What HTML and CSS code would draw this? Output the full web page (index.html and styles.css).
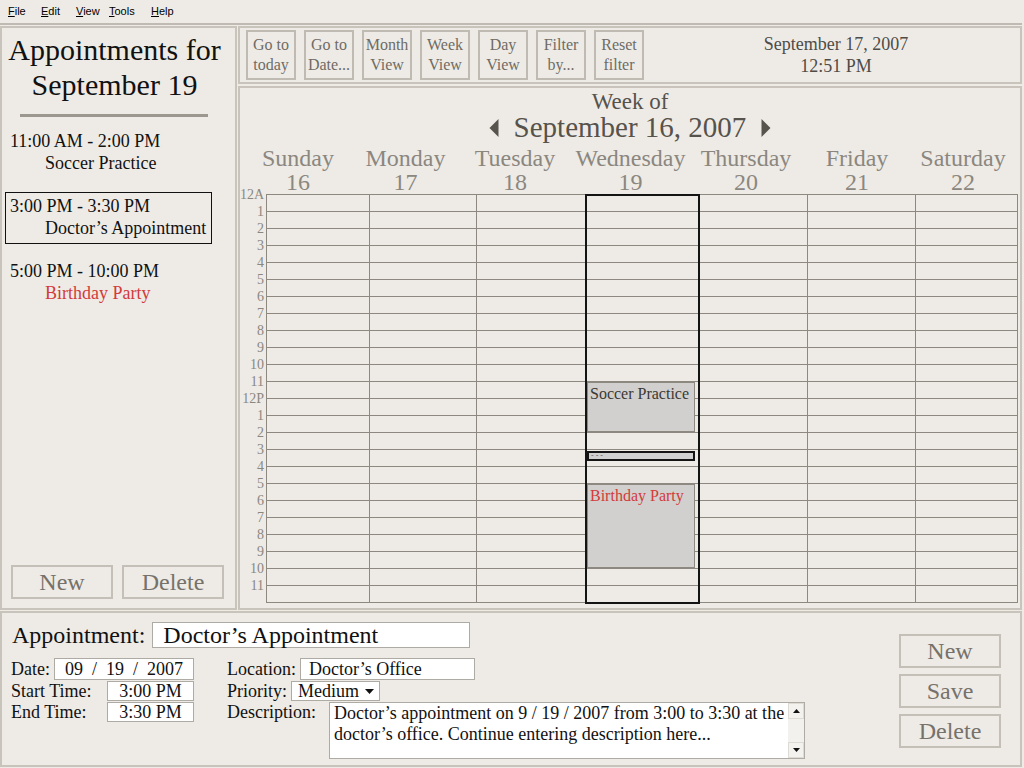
FILE: index.html
```html
<!DOCTYPE html>
<html>
<head>
<meta charset="utf-8">
<title>Calendar</title>
<link rel="stylesheet" href="styles.css">
</head>
<body>
<div class="app">
  <div class="menubar">
    <span class="menu"><u>F</u>ile</span>
    <span class="menu"><u>E</u>dit</span>
    <span class="menu"><u>V</u>iew</span>
    <span class="menu"><u>T</u>ools</span>
    <span class="menu"><u>H</u>elp</span>
  </div>

  <div class="main">
    <aside class="day-panel">
      <h1 class="day-title">Appointments for<br>September 19</h1>
      <div class="rule"></div>
      <ul class="appt-list">
        <li class="appt">
          <div class="appt-time">11:00 AM - 2:00 PM</div>
          <div class="appt-name">Soccer Practice</div>
        </li>
        <li class="appt selected">
          <div class="appt-time">3:00 PM - 3:30 PM</div>
          <div class="appt-name">Doctor’s Appointment</div>
        </li>
        <li class="appt">
          <div class="appt-time">5:00 PM - 10:00 PM</div>
          <div class="appt-name red">Birthday Party</div>
        </li>
      </ul>
      <div class="side-btns">
        <button class="btn">New</button>
        <button class="btn">Delete</button>
      </div>
    </aside>

    <section class="right">
      <div class="toolbar">
        <div class="tbtn"><span>Go to</span><span>today</span></div>
        <div class="tbtn"><span>Go to</span><span>Date...</span></div>
        <div class="tbtn"><span>Month</span><span>View</span></div>
        <div class="tbtn"><span>Week</span><span>View</span></div>
        <div class="tbtn"><span>Day</span><span>View</span></div>
        <div class="tbtn"><span>Filter</span><span>by...</span></div>
        <div class="tbtn"><span>Reset</span><span>filter</span></div>
        <div class="clock">September 17, 2007<br>12:51 PM</div>
      </div>

      <div class="calendar">
        <div class="week-title">Week of</div>
        <div class="week-nav">
          <svg class="arrow" width="10" height="18" viewBox="0 0 10 18"><path d="M9.5 0 L0.5 9 L9.5 18 Z" fill="#57534d"/></svg>
          <span>September 16, 2007</span>
          <svg class="arrow" width="10" height="18" viewBox="0 0 10 18"><path d="M0.5 0 L9.5 9 L0.5 18 Z" fill="#57534d"/></svg>
        </div>
        <div class="day-heads">
          <div class="dh"><span>Sunday</span><span>16</span></div>
          <div class="dh"><span>Monday</span><span>17</span></div>
          <div class="dh"><span>Tuesday</span><span>18</span></div>
          <div class="dh"><span>Wednesday</span><span>19</span></div>
          <div class="dh"><span>Thursday</span><span>20</span></div>
          <div class="dh"><span>Friday</span><span>21</span></div>
          <div class="dh"><span>Saturday</span><span>22</span></div>
        </div>
        <div class="week-body">
          <div class="hours">
            <span>12A</span><span>1</span><span>2</span><span>3</span><span>4</span><span>5</span>
            <span>6</span><span>7</span><span>8</span><span>9</span><span>10</span><span>11</span>
            <span>12P</span><span>1</span><span>2</span><span>3</span><span>4</span><span>5</span>
            <span>6</span><span>7</span><span>8</span><span>9</span><span>10</span><span>11</span>
          </div>
          <div class="grid">
            <div class="day"></div>
            <div class="day"></div>
            <div class="day"></div>
            <div class="day sel">
              <div class="event" style="top:187px;height:50px">Soccer Practice</div>
              <div class="event tiny" style="top:256px;height:10px">- - -</div>
              <div class="event red" style="top:289px;height:84px">Birthday Party</div>
            </div>
            <div class="day"></div>
            <div class="day"></div>
            <div class="day"></div>
          </div>
        </div>
      </div>
    </section>
  </div>

  <div class="details">
    <div class="form">
      <div class="appt-row">
        <span class="appt-label">Appointment:</span>
        <div class="in-title">Doctor’s Appointment</div>
      </div>
      <div class="fields">
        <div class="col col-left">
          <div class="frow tall">
            <span class="lbl">Date:</span>
            <div class="box date"><span>09</span><span>/</span><span>19</span><span>/</span><span>2007</span></div>
          </div>
          <div class="frow">
            <span class="lbl lbl-time">Start Time:</span>
            <div class="box time">3:00 PM</div>
          </div>
          <div class="frow">
            <span class="lbl lbl-time">End Time:</span>
            <div class="box time">3:30 PM</div>
          </div>
        </div>
        <div class="col col-mid">
          <div class="frow tall">
            <span class="lbl">Location:</span>
            <div class="box location">Doctor’s Office</div>
          </div>
          <div class="frow">
            <span class="lbl">Priority:</span>
            <div class="box select">Medium
              <svg width="9" height="5" viewBox="0 0 9 5"><path d="M0 0 L9 0 L4.5 5 Z" fill="#111"/></svg>
            </div>
          </div>
          <div class="frow desc-row">
            <span class="lbl lbl-desc">Description:</span>
            <div class="ta">
              <div class="ta-text">Doctor’s appointment on 9 / 19 / 2007 from 3:00 to 3:30 at the<br>doctor’s office. Continue entering description here...</div>
              <div class="sb">
                <div class="sb-btn"><svg width="7" height="4" viewBox="0 0 7 4"><path d="M0 4 L7 4 L3.5 0 Z" fill="#111"/></svg></div>
                <div class="sb-btn"><svg width="7" height="4" viewBox="0 0 7 4"><path d="M0 0 L7 0 L3.5 4 Z" fill="#111"/></svg></div>
              </div>
            </div>
          </div>
        </div>
      </div>
    </div>
    <div class="actions">
      <button class="btn">New</button>
      <button class="btn">Save</button>
      <button class="btn">Delete</button>
    </div>
  </div>
</div>
</body>
</html>
```

FILE: styles.css
```css
* { box-sizing: border-box; }

html, body {
  margin: 0;
  padding: 0;
  background: #eeebe6;
}

body {
  font-family: "Liberation Serif", "Times New Roman", serif;
  color: #111;
  width: 1024px;
  height: 768px;
  overflow: hidden;
}

.app {
  width: 1022px;
  height: 768px;
  display: flex;
  flex-direction: column;
}

/* Menu bar */
.menubar {
  height: 25px;
  border-bottom: 2px solid #bfbbb2;
  display: grid;
  grid-template-columns: 33px 35px 33px 42px auto;
  justify-content: start;
  align-items: center;
  padding: 0 0 1px 8px;
  font-family: "Liberation Sans", Arial, sans-serif;
  font-size: 11px;
  color: #000;
}

.menu u { text-decoration: underline; }

/* Main area */
.main {
  display: flex;
  gap: 1px;
  padding-top: 1px;
  height: 585px;
}

.day-panel {
  width: 237px;
  border: 2px solid #c8c4bb;
  display: flex;
  flex-direction: column;
  padding: 4px 0 9px 0;
}

.day-title {
  margin: 0;
  padding-right: 8px;
  font-size: 30px;
  line-height: 35px;
  font-weight: normal;
  text-align: center;
  color: #111;
}

.rule {
  margin: 12px 0 0 18px;
  width: 188px;
  height: 3px;
  background: #9c988f;
}

.appt-list {
  list-style: none;
  margin: 10px 0 0 3px;
  padding: 0;
  display: flex;
  flex-direction: column;
  gap: 13px;
}

.appt {
  width: 207px;
  border: 1px solid transparent;
  padding: 2px 4px 4px 4px;
  font-size: 18px;
  line-height: 22px;
  color: #111;
  white-space: nowrap;
}

.appt.selected { border-color: #111; }

.appt-name { padding-left: 35px; }

.red { color: #d33b3b; }

.side-btns {
  margin-top: auto;
  display: flex;
  gap: 9px;
  padding-left: 9px;
}

.btn {
  width: 102px;
  height: 34px;
  background: transparent;
  border: 2px solid #c4c0b7;
  font-family: "Liberation Serif", "Times New Roman", serif;
  font-size: 24px;
  line-height: 28px;
  color: #76726b;
  padding: 0;
  margin: 0;
}

/* Right column */
.right {
  flex: 1;
  display: flex;
  flex-direction: column;
  gap: 2px;
}

.toolbar {
  height: 58px;
  border: 2px solid #c8c4bb;
  display: flex;
  align-items: flex-start;
  gap: 8px;
  padding: 2px 0 0 6px;
}

.tbtn {
  width: 50px;
  height: 50px;
  border: 2px solid #bfbbb2;
  display: flex;
  flex-direction: column;
  align-items: center;
  justify-content: center;
  font-size: 16px;
  line-height: 20px;
  color: #6f6b65;
  white-space: nowrap;
}

.clock {
  flex: 1;
  text-align: center;
  font-size: 18px;
  line-height: 22px;
  color: #4f4b46;
  padding-top: 3px;
}

.calendar {
  flex: 1;
  border: 2px solid #c8c4bb;
  padding-top: 2px;
}

.week-title {
  text-align: center;
  font-size: 23px;
  line-height: 23px;
  color: #56524c;
}

.week-nav {
  display: flex;
  justify-content: center;
  align-items: center;
  gap: 15px;
  font-size: 29px;
  line-height: 29px;
  color: #56524c;
}

.arrow { display: block; margin-top: 1px; }

.day-heads {
  display: grid;
  grid-template-columns: 110px 105px 114px 117px 114px 108px 104px;
  margin: 4px 0 0 3px;
}

.dh {
  display: flex;
  flex-direction: column;
  align-items: center;
  font-size: 24px;
  line-height: 24px;
  color: #8b877f;
  white-space: nowrap;
}

.week-body {
  display: flex;
}

.hours {
  width: 26px;
  display: flex;
  flex-direction: column;
  align-items: flex-end;
  padding-right: 2px;
  margin-top: -8px;
  font-size: 14px;
  line-height: 17px;
  color: #8b877f;
}

.grid {
  display: grid;
  grid-template-columns: 103px 107px 109px 113px 109px 108px 101px;
  height: 409px;
  border: 1px solid #8d8981;
  border-bottom: none;
  background: repeating-linear-gradient(to bottom, transparent 0, transparent 16px, #8d8981 16px, #8d8981 17px);
}

.day {
  position: relative;
  border-right: 1px solid #8d8981;
}

.day:last-child { border-right: none; }

.day.sel {
  outline: 2px solid #141414;
  outline-offset: -1px;
  z-index: 1;
}

.event {
  position: absolute;
  left: 1px;
  right: 3px;
  background: #d1d0ce;
  border: 1px solid #8d8981;
  padding: 2px 2px;
  font-size: 16px;
  line-height: 17px;
  color: #3b3834;
  white-space: nowrap;
  overflow: hidden;
}

.event.red { color: #d33b3b; }

.event.tiny {
  border: 2px solid #141414;
  background: #d0d0d0;
  font-size: 8px;
  line-height: 6px;
  padding: 0 2px;
  color: #666;
}

/* Details panel */
.details {
  height: 156px;
  margin-top: 1px;
  border: 2px solid #c8c4bb;
  display: flex;
}

.form {
  flex: 1;
  padding: 9px 0 0 9px;
}

.appt-row {
  display: flex;
  align-items: center;
  gap: 7px;
  height: 26px;
}

.appt-label {
  font-size: 24px;
  line-height: 26px;
  padding-left: 1px;
}

.in-title {
  width: 318px;
  height: 26px;
  border: 1px solid #aeaba4;
  background: #fff;
  padding: 0 10px;
  font-size: 24px;
  line-height: 24px;
  white-space: nowrap;
}

.fields {
  display: flex;
  gap: 33px;
  margin-top: 10px;
}

.col {
  display: flex;
  flex-direction: column;
  gap: 1px;
  font-size: 18px;
}

.col-left { width: 183px; }

.frow {
  display: flex;
  align-items: center;
  height: 20px;
}

.frow.tall { height: 22px; }

.lbl {
  line-height: 20px;
  white-space: nowrap;
}

.lbl-time { width: 96px; }

.box {
  background: #fff;
  border: 1px solid #aeaba4;
  height: 100%;
  display: flex;
  align-items: center;
  font-size: 18px;
  line-height: 18px;
  white-space: nowrap;
}

.box.date {
  width: 142px;
  margin-left: 4px;
  justify-content: center;
  gap: 9px;
}

.box.time {
  width: 87px;
  justify-content: center;
}

.box.location {
  width: 175px;
  margin-left: 4px;
  padding-left: 8px;
}

.box.select {
  width: 89px;
  margin-left: 4px;
  padding-left: 6px;
  gap: 6px;
}

.frow.desc-row {
  height: 57px;
  align-items: flex-start;
}

.lbl-desc { width: 102px; }

.ta {
  width: 476px;
  height: 57px;
  border: 1px solid #aeaba4;
  background: #fff;
  display: flex;
}

.ta-text {
  flex: 1;
  padding: 0 4px;
  font-size: 18px;
  line-height: 21px;
  white-space: nowrap;
  overflow: hidden;
}

.sb {
  width: 16px;
  background: #f3f1ed;
  display: flex;
  flex-direction: column;
  justify-content: space-between;
}

.sb-btn {
  height: 16px;
  background: #f4f2ef;
  border: 1px solid #dedad4;
  display: flex;
  align-items: center;
  justify-content: center;
}

.actions {
  display: flex;
  flex-direction: column;
  gap: 6px;
  padding: 21px 19px 0 0;
}
```
